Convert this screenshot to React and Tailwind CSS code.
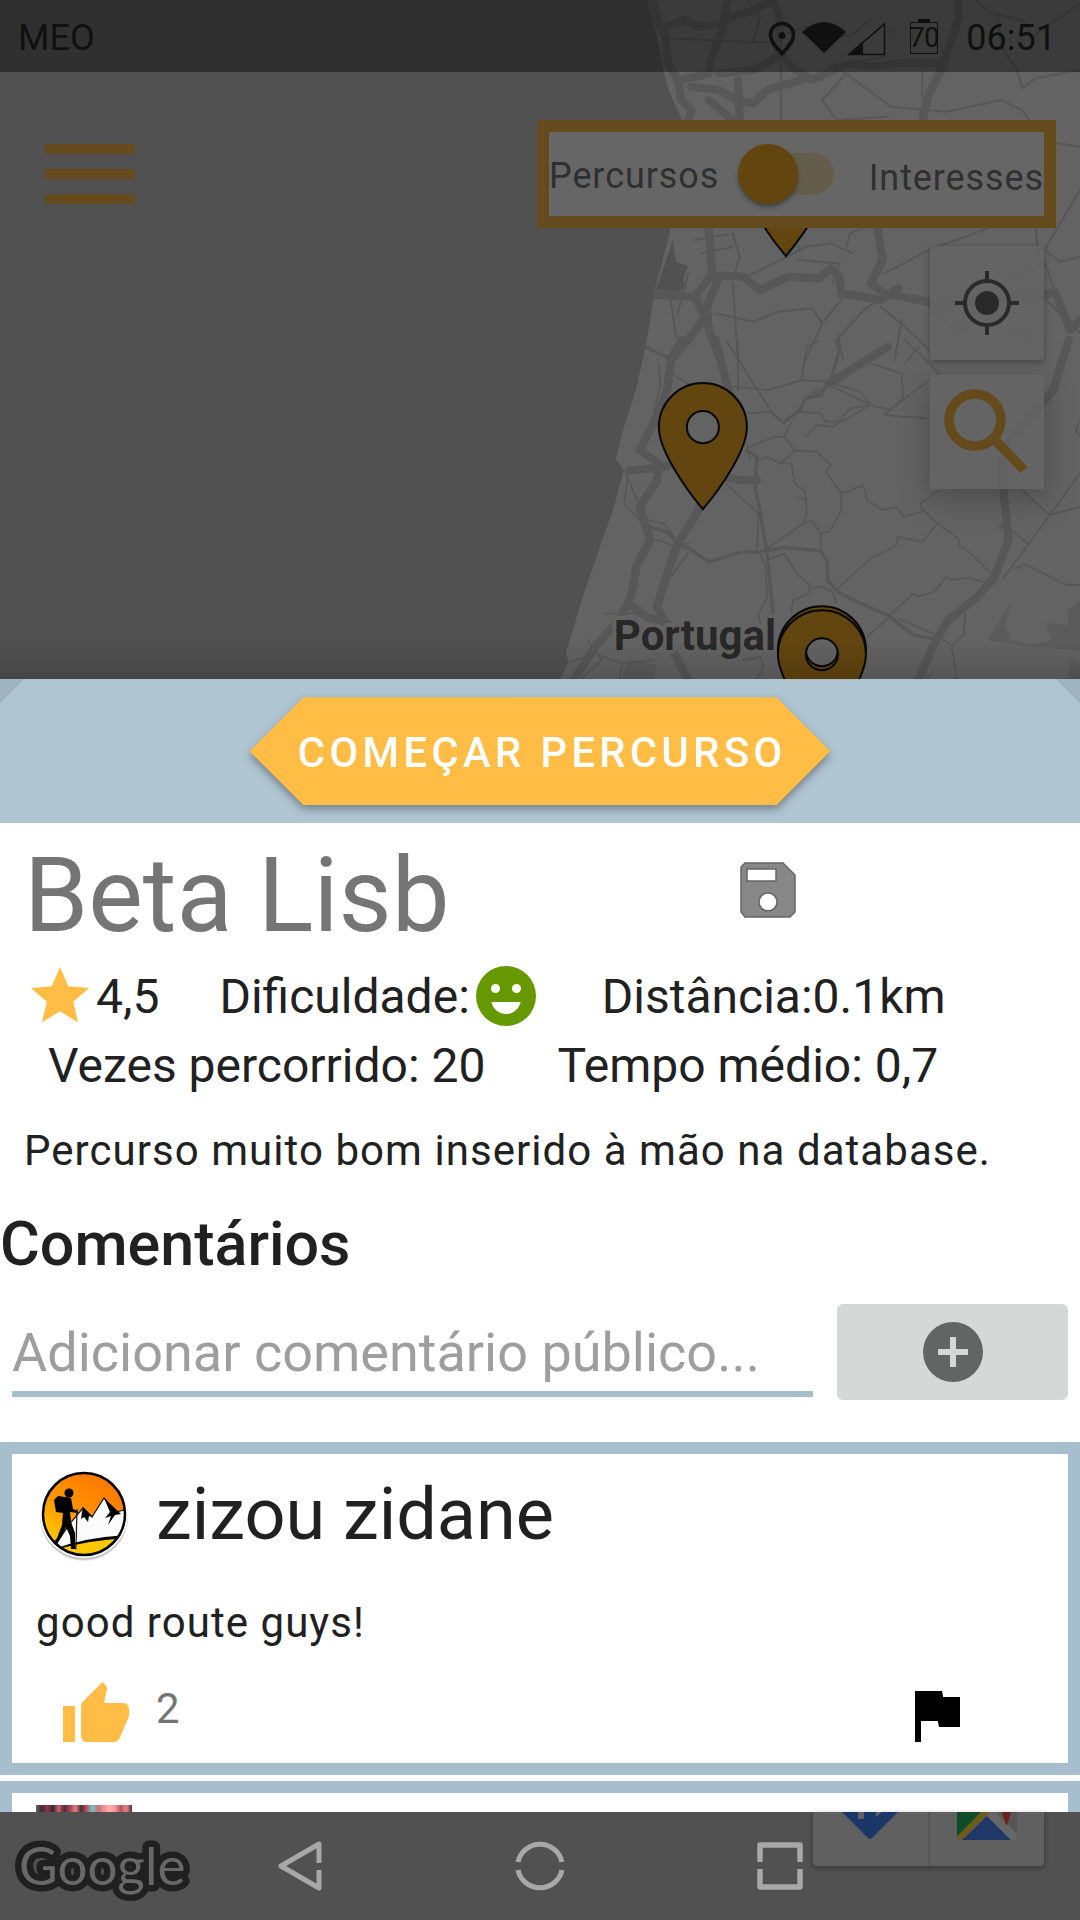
import React from "react";

const majorRoadsNorth = [
  "M330 0 L340 60 365 110 372 190 400 240 410 300 440 330 430 370",
  "M365 80 L420 60 460 80 530 70 560 50 620 30 680 0",
  "M545 0 L530 90 500 170 490 220 410 240",
  "M680 0 L700 70 690 150 730 200 790 240 860 205 900 190 960 200 1040 190 1170 190 1215 60 1215 0",
  "M440 260 L520 270 570 300 620 310 660 270 760 240",
  "M575 240 L580 360",
  "M700 165 L620 210 520 220",
  "M1175 190 L1130 280 1110 360",
  "M490 300 L560 360",
  "M490 680 L500 820 450 890 340 885",
  "M500 825 L590 830 640 870 680 850 720 830 810 835 845 805 870 830 875 880 990 900 1040 865",
  "M980 680 L995 780 960 850 1000 880 1130 905 1430 895 1495 875 1540 990 1568 960",
  "M450 890 L480 950 430 1020 380 1080",
  "M520 830 L485 920 490 990 525 1080",
];

const minorRoadsNorth = [
  "M370 115 L700 130 M600 0 L640 50 620 120 M700 190 L700 360 M890 220 L820 300 860 360 1010 350",
  "M880 215 L1020 320 1180 335 1340 300 1400 330 1420 360 M1110 200 L1110 300",
  "M1265 0 L1310 40 1400 60 1430 110 1568 10 M1330 60 L1340 140 1385 210 1400 265 1440 235 1568 210",
  "M820 240 L840 200 1000 170 M720 100 L770 80 900 110 960 60",
  "M1500 430 L1568 440 M1568 570 L1465 750 1510 785 1568 770 M1465 790 L1520 940",
  "M600 830 L720 770 770 740 845 730 910 760 M560 700 L580 770 560 840 M450 720 L560 700 M470 760 L560 740",
  "M750 780 L870 790 850 850 M700 690 L760 750 M890 740 L900 700 935 685",
  "M1000 820 L1130 750 1300 685 M1440 685 L1445 760 M1300 870 L1460 790",
  "M310 1045 L390 1080 M380 900 L395 1010 M560 850 L575 1080 M510 940 L620 965 690 935 790 925 820 970 770 1080",
  "M890 880 L820 970 M870 1010 L940 930 1000 890 M865 1000 L880 1080 M990 920 L1060 980 1140 1060 M1120 900 L1150 950 1230 990",
  "M1200 990 L1300 960 1465 1030 M1470 900 L1568 1000 M430 820 L400 940",
  "M1010 1040 L930 1080 M1050 960 L1030 1080",
];

const majorRoadsSouth = [
  "M410 0 L380 60 370 150 330 250 290 330 345 370 340 420 290 500 320 600 280 680 265 770 230 840 160 920 100 1017",
  "M510 0 L545 140 580 240 500 420 450 530 400 610 370 700 340 800 370 860 385 930 430 1017",
  "M260 390 L340 385 375 375",
  "M1010 20 L840 130 M530 410 L580 420 630 420",
  "M1535 0 L1490 150 1400 260 1345 330 1345 440 1360 600 1320 710 1270 770 1185 840 1140 920 1100 1017",
  "M270 800 L310 830 370 850",
];

const mediumRoadsSouth = [
  "M320 560 L370 575 400 610 440 630 490 665 585 635 640 635 710 622 815 632 835 665 835 720 865 755 920 785 1010 825 1085 885 1140 895",
  "M835 130 L815 165 770 175 755 210 710 245 M600 330 L630 350 625 440 640 520 660 640 670 750 678 830",
  "M840 135 L870 30 860 0",
];

const minorRoadsSouth = [
  "M310 20 L380 60 M345 70 L350 130 330 230 M380 100 L430 130 M575 0 L575 150 M540 0 L575 55 625 140 680 225 710 250",
  "M560 140 L660 150 760 120 830 125 930 155 960 195 1020 210 M760 115 L775 20 810 0 M830 130 L960 195 850 260 805 255 770 290",
  "M600 220 L670 215 700 240 M755 215 L815 220 830 245 865 245 900 205 960 195 M960 70 L1050 100 1055 175 1000 225 1120 235",
  "M1000 220 L1160 100 1060 0 M1060 70 L1100 20 M710 290 L740 330 805 335 845 375 830 395 875 460 940 435 950 480 995 510 1035 500 1055 530 1110 515 1105 490 1160 450",
  "M610 320 L680 290 710 290 730 245 M630 360 L660 350 700 370 740 330 M700 370 L730 370 740 430 770 455 775 520 765 550 640 640",
  "M875 460 L875 510 840 575 815 580 815 632 M765 550 L790 540 815 580 M865 745 L960 655 1035 615 1040 590 1110 605 1155 550 1115 510",
  "M1155 550 L1215 595 1220 620 1240 630 1330 720 M1015 825 L1085 760 1100 770 1145 755 1180 710 1195 720 1245 712 1300 730",
  "M1345 715 L1480 525 1568 400 M1400 450 L1480 525 1568 500 M1370 570 L1415 610 M1380 685 L1410 672 1530 735 1568 735",
  "M540 430 L635 520 630 630 M250 400 L290 500 M255 410 L245 490 290 540 M310 540 L360 550 390 590 M320 600 L350 600 380 615 435 610",
  "M430 640 L380 710 M640 640 L655 680 660 770 635 820 640 860 M660 660 L710 640 750 705 785 735 780 760 735 780 730 820",
  "M785 745 L815 740 850 755 860 790 M190 820 L280 820 M90 965 L160 940 240 970 330 960 M140 900 L180 960 120 1017 M240 970 L230 1017",
  "M1015 830 L950 890 M1040 835 L1140 880 1195 915 1230 885 1235 820 M1195 915 L1210 1017 M590 960 L640 950 650 980 630 1017",
  "M1568 240 L1555 270 1568 290 M600 310 L610 360",
];

function Pin({ x, y }) {
  return (
    <path
      transform={`translate(${x} ${y})`}
      d="M0 82C-20 58-44 22-44 0A44 44 0 1 1 44 0C44 22 20 58 0 82ZM0-16A16 16 0 1 0 0 16A16 16 0 1 0 0-16Z"
      fill="#63460f"
      stroke="#080808"
      strokeWidth="2"
      fillRule="evenodd"
    />
  );
}

function RoadMap() {
  return (
    <svg
      className="absolute inset-0 h-full w-full"
      viewBox="0 0 1080 679"
      preserveAspectRatio="xMaxYMin slice"
      aria-hidden="true"
    >
      <defs>
        <linearGradient id="edge" x1="0" y1="0" x2="0" y2="1">
          <stop offset="0" stopColor="#000" stopOpacity="0" />
          <stop offset="1" stopColor="#000" stopOpacity="0.14" />
        </linearGradient>
      </defs>
      <path
        d="M648 0L651 14 658 40 664 72 668 88 680 115 690 150 682 190 671 228 655 290 647 340 636 390 621 437 616 459 624 470 614 507 585 590 566 653 569 662 560 679H1080V0Z"
        fill="#636363"
      />
      <path d="M673 240L676 262 688 266 683 280 687 288 676 292 656 290Z" fill="#515151" />
      <g fill="#5b5b5b">
        <path d="M987 640L1012 600 1005 625 1012 640 1030 645 1052 640 1045 623 1068 625 1068 610 1080 600V650L1045 648 1020 645Z" />
        <path d="M622 679L628 660 656 664 655 679ZM925 679L935 668 930 679ZM1070 660L1080 665V679H1068Z" />
        <path d="M998 525L1005 521 1001 533ZM808 394L823 386 816 396ZM795 498L807 496 808 502Z" />
        <path d="M890 25L940 30 925 42 888 36Z" fillOpacity="0.5" />
      </g>
      <g
        fill="none"
        stroke="#575757"
        strokeLinejoin="round"
        strokeLinecap="round"
        transform="translate(540 0) scale(.3444 .3333)"
      >
        {majorRoadsNorth.map((d) => (
          <path key={d} d={d} strokeWidth="24" />
        ))}
        {minorRoadsNorth.map((d) => (
          <path key={d} d={d} strokeWidth="6" />
        ))}
      </g>
      <g
        fill="none"
        stroke="#575757"
        strokeLinejoin="round"
        strokeLinecap="round"
        transform="translate(540 340) scale(.3444 .3333)"
      >
        {majorRoadsSouth.map((d) => (
          <path key={d} d={d} strokeWidth="24" />
        ))}
        {mediumRoadsSouth.map((d) => (
          <path key={d} d={d} strokeWidth="10" />
        ))}
        {minorRoadsSouth.map((d) => (
          <path key={d} d={d} strokeWidth="5" />
        ))}
      </g>
      <Pin x={786} y={174} />
      <Pin x={703} y={427} />
      <text
        x="614"
        y="650"
        fontFamily="Roboto, sans-serif"
        fontWeight="700"
        fontSize="42"
        fill="#282828"
        stroke="#636363"
        strokeWidth="8"
        strokeLinejoin="round"
        paintOrder="stroke"
      >
        Portugal
      </text>
      <Pin x={822} y={650} />
      <Pin x={822} y={654} />
      <rect x="0" y="640" width="1080" height="39" fill="url(#edge)" />
    </svg>
  );
}

function StatusBar() {
  return (
    <div className="relative flex h-[72px] items-center justify-between bg-black/40 pt-1 pr-6 pl-[18px] text-4xl text-[#101010]">
      <span>MEO</span>
      <div className="flex items-center">
        <svg className="h-9 w-7" viewBox="0 0 28 36" aria-label="Localização">
          <path
            d="M14 3.500C7.500 3.500 2.500 8.500 2.500 15C2.500 22 9 28 14 33.500C19 28 25.500 22 25.500 15C25.500 8.500 20.500 3.500 14 3.500Z"
            fill="none"
            stroke="currentColor"
            strokeWidth="3.500"
          />
          <circle cx="14" cy="15.500" r="3.500" fill="currentColor" />
        </svg>
        <svg className="ml-1.5 h-9 w-11" viewBox="0 0 44 36" aria-label="Wi-Fi">
          <path d="M0 12Q22-8 44 12L22 33Z" fill="currentColor" />
        </svg>
        <svg className="h-9 w-10" viewBox="0 0 40 36" aria-label="Rede">
          <path d="M3 34.500H38.500V4Z" fill="none" stroke="currentColor" strokeWidth="1.500" />
          <path d="M2 35H17V21Z" fill="currentColor" />
        </svg>
        <div className="relative ml-6 flex h-8 w-7 items-center justify-center border border-[#101010] text-[27px] leading-8">
          <span className="absolute -top-1 left-1/2 h-[3px] w-3 -translate-x-1/2 bg-[#101010]" />
          70
        </div>
        <time className="ml-7">06:51</time>
      </div>
    </div>
  );
}

function MapArea() {
  return (
    <section className="relative min-h-0 flex-1 overflow-hidden bg-[#515151]">
      <RoadMap />
      <StatusBar />
      <div className="relative flex items-start justify-between pt-12 pr-6 pl-[45px]">
        <button type="button" aria-label="Menu" className="mt-6 flex w-[90px] flex-col gap-[15px]">
          <span className="h-2.5 bg-[#644a1c]" />
          <span className="h-2.5 bg-[#644a1c]" />
          <span className="h-2.5 bg-[#644a1c]" />
        </button>
        <label className="flex h-[108px] w-[519px] items-center justify-between border-12 border-[#644a1c] bg-[#666666] text-4xl tracking-wide text-[#303030]">
          <span className="pt-1">Percursos</span>
          <span className="relative -ml-4 flex h-[60px] w-24 items-center">
            <input type="checkbox" role="switch" className="peer sr-only" />
            <span className="ml-3 h-[42px] flex-1 rounded-full bg-[#655d4c]" />
            <span className="absolute left-0 size-[60px] rounded-full bg-[#63460f] shadow-[0_3px_4px_rgba(0,0,0,0.35)] peer-checked:left-9" />
          </span>
          <span className="pt-2">Interesses</span>
        </label>
      </div>
      <div className="relative mt-[18px] flex flex-col items-end gap-[15px] pr-9">
        <button
          type="button"
          aria-label="A minha localização"
          className="flex size-[114px] items-center justify-center rounded bg-[#646464]/90 shadow-[0_2px_6px_rgba(0,0,0,0.3)]"
        >
          <svg className="size-[66px]" viewBox="0 0 66 66" fill="none" stroke="#2a2a2a" strokeWidth="4">
            <circle cx="33" cy="33" r="22" />
            <path d="M33 1V10M33 56V65M1 33H10M56 33H65" />
            <circle cx="33" cy="33" r="12" fill="#2a2a2a" stroke="none" />
          </svg>
        </button>
        <button
          type="button"
          aria-label="Pesquisar"
          className="flex size-[114px] items-center justify-center bg-[#646464]/90 shadow-[0_10px_30px_rgba(0,0,0,0.25)]"
        >
          <svg className="size-[86px]" viewBox="0 0 86 86" fill="none" stroke="#654a1b" strokeWidth="9.500">
            <circle cx="31" cy="31" r="26" />
            <path d="M53 53L80 81" />
            <path d="M50 53V57L54 61L60 54L56 50Z" fill="#654a1b" stroke="none" />
          </svg>
        </button>
      </div>
    </section>
  );
}

function HikerAvatar() {
  return (
    <svg className="size-24 shrink-0" viewBox="0 0 96 96" aria-label="zizou zidane">
      <defs>
        <linearGradient id="sunset" x1="0.8" y1="0" x2="0.1" y2="1">
          <stop offset="0" stopColor="#ff6f00" />
          <stop offset="0.5" stopColor="#ff9500" />
          <stop offset="0.85" stopColor="#ffcf00" />
        </linearGradient>
        <clipPath id="disc">
          <circle cx="48" cy="47" r="41" />
        </clipPath>
      </defs>
      <circle cx="48" cy="50" r="44" fill="#000" fillOpacity="0.1" />
      <circle cx="48" cy="49" r="44" fill="#000" fillOpacity="0.14" />
      <circle cx="48" cy="47" r="44" fill="#fff" />
      <g clipPath="url(#disc)">
        <rect width="96" height="96" fill="url(#sunset)" />
        <path d="M16 82L36 54 47 41 56 50 68 31 80 45 92 42V70L40 78 24 84Z" fill="#fbfbfb" stroke="#111" strokeWidth="1.200" />
        <path d="M47 40L57 50 53 49 52 55 48 50 45 52 46 45ZM68 31L85 47 79 48 72 58 75 49 69 51 74 45Z" fill="#000" />
        <path d="M20 82Q50 71 92 69V92H28Z" fill="#fdc800" />
        <path d="M18 82Q50 70 92 68V71Q56 73 26 81Z" fill="#000" />
        <circle cx="33" cy="26" r="4.500" fill="#000" />
        <path d="M29 23H37V24H30Z" fill="#000" />
        <path d="M29 30L35 31 37 42 42 44V46L34 45 35 55 39 66V79L41 82H35L34 69 30 60 26 69 20 79 17 81 16 77 21 71 26 58 27 46 20 45 18 33 22 29Z" fill="#000" />
        <path d="M41 42L40 80" stroke="#111" strokeWidth="1.200" />
      </g>
      <circle cx="48" cy="47" r="41" fill="none" stroke="#000" strokeWidth="2.500" />
    </svg>
  );
}

function SecondAvatar() {
  const tints = [
    "#6b6064", "#3f2a3c", "#8a3a48", "#3a2334", "#c7616b", "#542b3c", "#a04350", "#e57f84",
    "#4b2a3a", "#b65660", "#6fc6cb", "#c9707a", "#f08f90", "#ffb0a9", "#f59a9a", "#b5545f", "#e98488", "#5a2d3b",
  ];
  return (
    <svg className="size-24 shrink-0" viewBox="0 0 96 96" aria-label="Fotografia de perfil">
      <defs>
        <linearGradient id="photo">
          {tints.map((tint, i) => (
            <stop key={i} offset={i / 17} stopColor={tint} />
          ))}
        </linearGradient>
      </defs>
      <rect width="96" height="96" fill="url(#photo)" />
    </svg>
  );
}

function RouteSheet() {
  return (
    <main className="h-[59vh] shrink-0 overflow-hidden bg-white text-[#212121]">
      <div className="bg-[#9fb4c0]">
        <div className="flex justify-center bg-[#b0c5d2] py-[18px] [clip-path:polygon(24px_0,calc(100%-24px)_0,100%_24px,100%_100%,0_100%,0_24px)]">
          <div className="drop-shadow-[0_4px_4px_rgba(0,0,0,0.35)]">
            <button
              type="button"
              className="h-[108px] bg-[#ffbd45] pt-0.5 pr-11 pl-12 text-[42px] font-medium tracking-widest text-white [clip-path:polygon(54px_0,calc(100%-54px)_0,100%_50%,calc(100%-54px)_100%,54px_100%,0_50%)]"
            >
              COMEÇAR PERCURSO
            </button>
          </div>
        </div>
      </div>

      <div className="grid grid-cols-[2fr_1fr] items-center pt-3 pl-6">
        <h1 className="text-[103px] leading-[122px] text-[#757575]">Beta Lisb</h1>
        <button type="button" aria-label="Guardar" className="mb-3 ml-3 size-14 justify-self-start">
          <svg viewBox="0 0 56 56" fill="#878787" stroke="#666" strokeWidth="1.500">
            <path
              fillRule="evenodd"
              d="M5 1H43L55 13V50L50 55H5L1 50V5ZM7 7H36V19H7ZM28 31A9 9 0 1 0 28 49A9 9 0 1 0 28 31Z"
            />
          </svg>
        </button>
      </div>

      <div className="mt-1 flex h-[70px] items-center pl-[25px] text-5xl">
        <svg className="size-[70px] shrink-0" viewBox="0 0 24 24" fill="#ffbd45" aria-label="Classificação">
          <path d="M12 17.270L18.180 21l-1.640-7.030L22 9.240l-7.190-.61L12 2 9.190 8.630 2 9.240l5.460 4.730L5.820 21z" />
        </svg>
        <span className="pt-0.5 pl-px">4,5</span>
        <span className="ml-15 pt-0.5">Dificuldade:</span>
        <svg className="size-[72px] shrink-0" viewBox="0 0 24 24" aria-label="Fácil">
          <circle cx="12" cy="12" r="10" fill="#669900" />
          <circle cx="8.500" cy="9.500" r="1.500" fill="#fff" />
          <circle cx="15.500" cy="9.500" r="1.500" fill="#fff" />
          <path d="M7.100 14H16.900C16.300 16.400 14.300 18 12 18S7.700 16.400 7.100 14Z" fill="#fff" />
        </svg>
        <span className="ml-15 pt-0.5">Distância:0.1km</span>
      </div>
      <div className="flex h-[70px] items-center gap-[72px] pl-12 text-5xl">
        <span>Vezes percorrido: 20</span>
        <span>Tempo médio: 0,7</span>
      </div>
      <p className="mt-[22px] pl-6 text-[42px] leading-14 tracking-wide">
        Percurso muito bom inserido à mão na database.
      </p>

      <h2 className="mt-[25px] text-[61px] leading-20 font-medium">Comentários</h2>
      <form className="mt-5 flex gap-6 px-3" onSubmit={(e) => e.preventDefault()}>
        <input
          type="text"
          aria-label="Adicionar comentário público"
          placeholder="Adicionar comentário público..."
          className="mb-[3px] h-[93px] min-w-0 flex-1 border-b-6 border-[#a7bfcd] bg-transparent pt-2.5 text-[54px] outline-none placeholder:text-[#9e9e9e]"
        />
        <button
          type="submit"
          aria-label="Publicar comentário"
          className="flex h-24 w-[231px] items-center justify-center rounded-md bg-[#d6d8d7]"
        >
          <svg className="size-[60px]" viewBox="0 0 60 60">
            <circle cx="30" cy="30" r="30" fill="#626563" />
            <path d="M30 15V45M15 30H45" stroke="#d6d8d7" strokeWidth="6" />
          </svg>
        </button>
      </form>

      <div className="mt-[42px] flex flex-col gap-1.5">
        <article className="border-12 border-[#a7bfcd] px-6 pt-[13px] pb-3">
          <header className="flex items-center gap-6">
            <HikerAvatar />
            <h3 className="text-7xl leading-24">zizou zidane</h3>
          </header>
          <p className="mt-8 text-[42px] leading-14 tracking-wide">good route guys!</p>
          <div className="mt-7 flex items-start pr-[72px] pl-6">
            <button type="button" className="flex items-start gap-6 text-[42px] text-[#757575]">
              <svg className="size-[72px]" viewBox="0 0 24 24" fill="#ffbd45" aria-label="Gostar">
                <path d="M1 21h4V9H1v12zm22-11c0-1.100-.9-2-2-2h-6.310l.95-4.570.03-.32c0-.41-.17-.79-.44-1.060L14.170 1 7.590 7.590C7.220 7.950 7 8.450 7 9v10c0 1.100.9 2 2 2h9c.83 0 1.540-.5 1.840-1.220l3.020-7.050c.09-.23.14-.47.14-.73v-2z" />
              </svg>
              <span className="leading-15">2</span>
            </button>
            <button type="button" aria-label="Denunciar" className="ml-auto">
              <svg className="size-[72px]" viewBox="0 0 24 24" fill="#000">
                <path d="M14.400 6L14 4H5v17h2v-7h5.600l.4 2h7V6z" />
              </svg>
            </button>
          </div>
        </article>
        <article className="border-12 border-[#a7bfcd] px-6 py-3">
          <SecondAvatar />
        </article>
      </div>
    </main>
  );
}

function MapToolbar() {
  return (
    <div className="absolute top-0 right-9 flex h-[54px] w-[231px] divide-x-2 divide-[#555] rounded-b bg-[#606060] shadow-[0_2px_6px_rgba(0,0,0,0.3)]">
      <a href="#direcoes" aria-label="Direções" className="flex flex-1 justify-center">
        <svg className="h-7 w-[60px]" viewBox="0 0 60 28">
          <path d="M2 0H58L32 26Q30 28 28 26Z" fill="#1b3768" />
          <path d="M18 0H24V7H18ZM36 0H42L36 5Z" fill="#606060" />
        </svg>
      </a>
      <a href="#mapas" aria-label="Abrir no Google Maps" className="flex flex-1 justify-center">
        <svg className="h-7 w-[60px]" viewBox="0 0 60 28">
          <path d="M0 0H26L0 26Z" fill="#0f4a2a" />
          <path d="M35 0H60V24Z" fill="#565656" />
          <path d="M24 0H33L6 27Q2 30 0 24Z" fill="#6b5c1c" />
          <path d="M5 28L30 4 54 28Z" fill="#1f3868" />
          <path d="M33 0H38L60 22V28H54L30 4Z" fill="#666" />
          <path d="M45 0H54L50 13H49Z" fill="#6a211d" />
        </svg>
      </a>
    </div>
  );
}

function NavBar() {
  return (
    <nav className="relative flex h-[108px] shrink-0 items-center justify-center gap-[180px] bg-[#515151]">
      <svg className="absolute top-0 left-0 h-[108px] w-[200px]" viewBox="0 0 200 108">
        <text
          x="19"
          y="73"
          fontFamily="Lato, sans-serif"
          fontSize="53"
          fill="#686868"
          stroke="#202020"
          strokeWidth="13"
          strokeLinejoin="round"
          paintOrder="stroke"
        >
          Google
        </text>
      </svg>
      <MapToolbar />
      <button type="button" aria-label="Voltar" className="relative size-[60px]">
        <svg viewBox="0 0 60 60" fill="none" stroke="#a8a8a8" strokeWidth="5" strokeLinejoin="round">
          <path d="M49 27V8L11 30 49 52V34" />
        </svg>
      </button>
      <button type="button" aria-label="Início" className="relative size-[60px]">
        <svg viewBox="0 0 60 60" fill="none" stroke="#a8a8a8" strokeWidth="5">
          <path d="M8 26A22.500 22.500 0 0 1 52 26M8 34A22.500 22.500 0 0 0 52 34" />
        </svg>
      </button>
      <button type="button" aria-label="Recentes" className="relative size-[60px]">
        <svg viewBox="0 0 60 60" fill="none" stroke="#a8a8a8" strokeWidth="5.500" strokeLinejoin="round">
          <path d="M10 26V9H50V26M10 33V51H50V33" />
        </svg>
      </button>
    </nav>
  );
}

export default function App() {
  return (
    <div className="flex h-screen flex-col overflow-hidden font-['Roboto',sans-serif]">
      <MapArea />
      <RouteSheet />
      <NavBar />
    </div>
  );
}
